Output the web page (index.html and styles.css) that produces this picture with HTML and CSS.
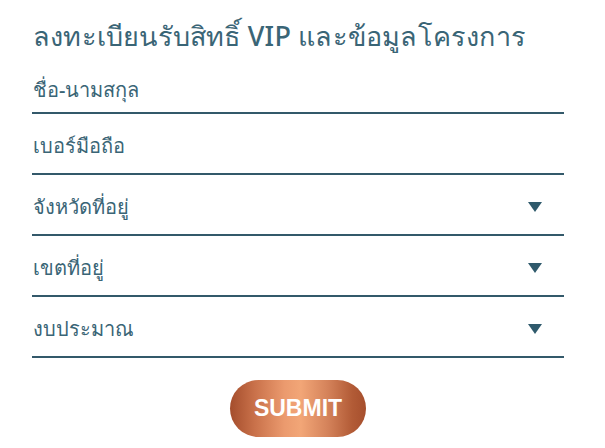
FILE: index.html
```html
<!DOCTYPE html>
<html lang="th">
<head>
<meta charset="UTF-8">
<meta name="viewport" content="width=device-width, initial-scale=1.0">
<title>ลงทะเบียนรับสิทธิ์ VIP</title>
<link rel="stylesheet" href="styles.css">
</head>
<body>

<form class="vip-form">
    <h1 class="form-title">ลงทะเบียนรับสิทธิ์ VIP และข้อมูลโครงการ</h1>

    <div class="field">
        <input type="text" placeholder="ชื่อ-นามสกุล">
    </div>
    <div class="field">
        <input type="tel" placeholder="เบอร์มือถือ">
    </div>
    <div class="field select">
        <span class="label">จังหวัดที่อยู่</span>
        <span class="arrow"></span>
    </div>
    <div class="field select">
        <span class="label">เขตที่อยู่</span>
        <span class="arrow"></span>
    </div>
    <div class="field select">
        <span class="label">งบประมาณ</span>
        <span class="arrow"></span>
    </div>

    <div class="actions">
        <button type="submit" class="submit-btn">SUBMIT</button>
    </div>
</form>

</body>
</html>
```

FILE: styles.css
```css
body {
    margin: 0;
    background: #fff;
    font-family: "Noto Sans", "DejaVu Sans", sans-serif;
    color: #3a6576;
}
.vip-form {
    width: 532px;
    padding: 16px 0 0 32px;
}
.form-title {
    margin: 0 0 6px 1px;
    font-size: 27px;
    font-weight: 500;
    line-height: 40px;
    letter-spacing: 0.2px;
    color: #3a6576;
}
.field {
    display: flex;
    align-items: center;
    justify-content: space-between;
    height: 61px;
    border-bottom: 2px solid #33596a;
    box-sizing: border-box;
    padding-top: 4px;
}
.field:first-of-type {
    height: 52px;
}
.field input,
.field .label {
    border: none;
    outline: none;
    padding: 0 0 0 1px;
    width: 100%;
    font-family: inherit;
    font-size: 20px;
    font-weight: 500;
    color: #3a6576;
    background: transparent;
}
.field input::placeholder {
    color: #3a6576;
    opacity: 1;
}
.arrow {
    flex: none;
    width: 0;
    height: 0;
    margin: 0 22px 0 0;
    border-left: 7px solid transparent;
    border-right: 7px solid transparent;
    border-top: 10px solid #2f5a6c;
}
.actions {
    display: flex;
    justify-content: center;
    padding-top: 22px;
}
.submit-btn {
    width: 136px;
    height: 57px;
    border: none;
    border-radius: 29px;
    background: linear-gradient(90deg, #a44d2c 0%, #c9714a 18%, #eb9a6e 40%, #f2a677 52%, #d4825a 72%, #b25b36 90%, #a64f2d 100%);
    color: #fff;
    font-family: "Liberation Sans", Arial, sans-serif;
    font-size: 23px;
    font-weight: 700;
    cursor: pointer;
}
```
